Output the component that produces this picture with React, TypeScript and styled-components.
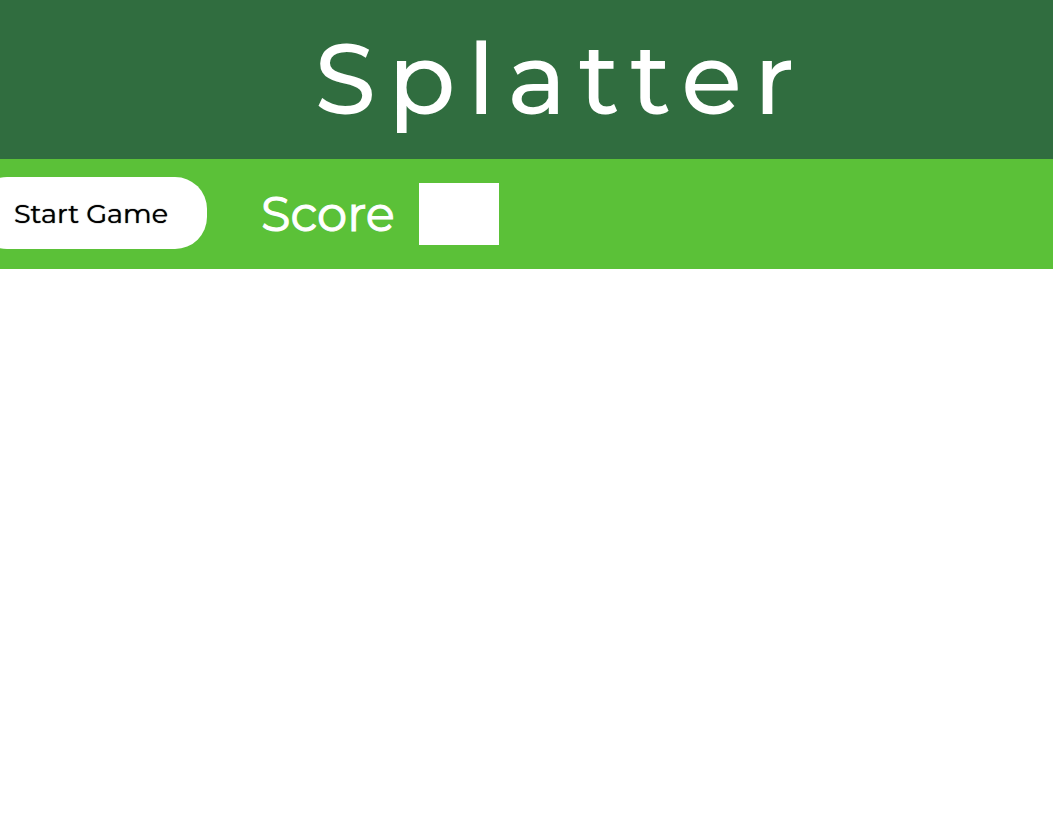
import React from "react";
import styled, { createGlobalStyle } from "styled-components";

const GlobalStyle = createGlobalStyle`
  * { box-sizing: border-box; }
  body {
    margin: 0;
    background: #fff;
    font-family: Montserrat, Inter, "Open Sans", sans-serif;
    overflow-x: hidden;
  }
`;

const Header = styled.header`
  background: #306d3f;
  padding: 18px 0 19px 68px;
  text-align: center;
`;

const Title = styled.h1`
  margin: 0;
  color: #fff;
  font-size: 99px;
  line-height: 122px;
  font-weight: 500;
  letter-spacing: 12px;
`;

const Toolbar = styled.section`
  display: flex;
  align-items: flex-start;
  padding: 18px 0 20px;
  background: #5bc138;
`;

const StartButton = styled.button`
  width: 232px;
  height: 72px;
  margin-left: -25px;
  border: 0;
  border-radius: 32px;
  background: #fff;
  color: #000;
  font-family: inherit;
  font-size: 27px;
  font-weight: 400;
  text-shadow: 0 0 1px #000;
`;

const ScoreLabel = styled.label`
  display: flex;
  align-items: center;
  gap: 24px;
  margin: 6px 0 0 54px;
  color: #fff;
  font-size: 48px;
  font-weight: 400;
  line-height: 60px;
  -webkit-text-stroke: 1px #fff;
`;

const ScoreBox = styled.input`
  width: 80px;
  height: 62px;
  padding: 0 8px;
  border: 0;
  background: #fff;
  color: #000;
  font: inherit;
`;

export default function App() {
  return (
    <>
      <GlobalStyle />
      <Header>
        <Title>Splatter</Title>
      </Header>
      <main>
        <Toolbar>
          <StartButton type="button">Start Game</StartButton>
          <ScoreLabel>
            Score
            <ScoreBox type="text" readOnly />
          </ScoreLabel>
        </Toolbar>
      </main>
    </>
  );
}
